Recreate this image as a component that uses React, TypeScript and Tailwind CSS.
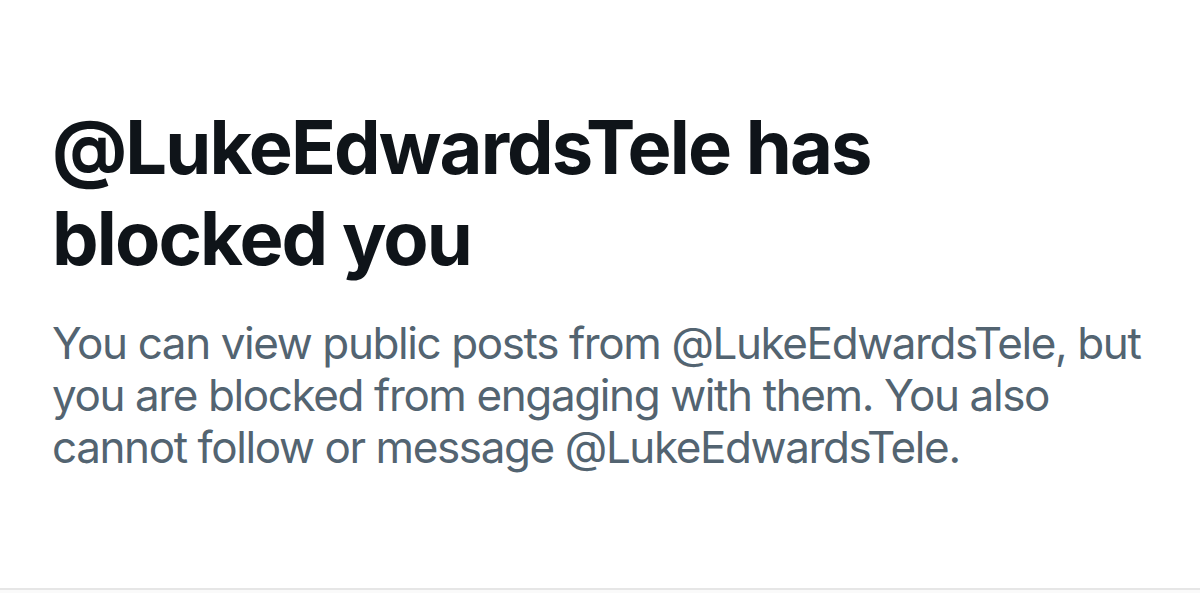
export default function App() {
  const handle = '@LukeEdwardsTele';

  return (
    <div className="w-[1200px] h-[593px] bg-white flex flex-col overflow-hidden" style={{ fontFamily: 'Inter, "Noto Sans", sans-serif' }}>
      <div className="flex-1 px-[52px] pt-[102px]">
        <h1 className="text-[74px] leading-[91px] font-bold text-[#0f1419] tracking-[-1.9px]">
          {handle} has blocked you
        </h1>
        <p className="mt-[33px] text-[44px] leading-[52px] text-[#536471] tracking-[-1.4px] max-w-[1110px]">
          You can view public posts from {handle}, but you are blocked from engaging with them. You also cannot follow or message {handle}.
        </p>
      </div>
      <div className="h-[5px] border-t-2 border-[#e6e6e6] bg-[#fafafa]" />
    </div>
  );
}
